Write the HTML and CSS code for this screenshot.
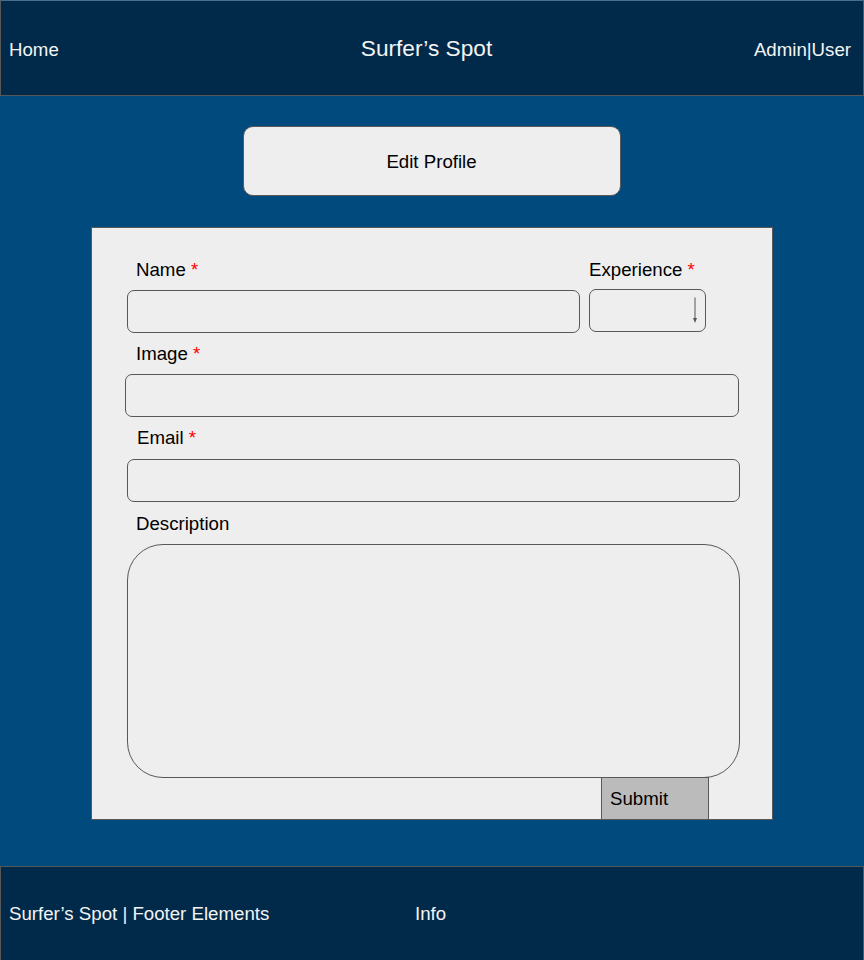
FILE: index.html
```html
<!DOCTYPE html>
<html lang="en">
<head>
<meta charset="utf-8">
<title>Surfer's Spot - Edit Profile</title>
<link rel="stylesheet" href="styles.css">
</head>
<body>
<header class="topbar">
  <a class="nav-home">Home</a>
  <div class="brand">Surfer’s Spot</div>
  <a class="nav-user">Admin|User</a>
</header>
<main class="content">
  <div class="page-title">Edit Profile</div>
  <form class="profile-form">
    <div class="row-top">
      <div class="field-name">
        <div class="label label-name">Name <span class="req">*</span></div>
        <div class="input input-name"></div>
      </div>
      <div class="field-exp">
        <div class="label label-exp">Experience <span class="req">*</span></div>
        <div class="select">
          <svg class="select-arrow" width="8" height="28" viewBox="0 0 8 28">
            <line x1="4" y1="0.5" x2="4" y2="22" stroke="#555" stroke-width="1"/>
            <path d="M2 21 L6 21 L4 26 Z" fill="#555"/>
          </svg>
        </div>
      </div>
    </div>
    <div class="label label-image">Image <span class="req">*</span></div>
    <div class="input input-image"></div>
    <div class="label label-email">Email <span class="req">*</span></div>
    <div class="input input-email"></div>
    <div class="label label-desc">Description</div>
    <div class="textarea"></div>
    <div class="submit">Submit</div>
  </form>
</main>
<footer class="footbar">
  <span class="foot-left">Surfer’s Spot | Footer Elements</span>
  <span class="foot-info">Info</span>
</footer>
</body>
</html>
```
FILE: styles.css
```css
* { box-sizing: border-box; }
html, body { margin: 0; padding: 0; }
body {
  font-family: "Liberation Sans", Arial, sans-serif;
  font-size: 18.67px;
  color: #000;
  background: #014a7d;
  overflow: hidden;
}

.topbar {
  height: 96px;
  background: #012a4a;
  border: 1px solid #575757;
  border-top-color: #4a6d8c;
  display: grid;
  grid-template-columns: 1fr auto 1fr;
  align-items: center;
  padding: 0 12px 0 8px;
  color: #f4f4f4;
}
.nav-home { justify-self: start; padding-top: 4px; }
.brand { font-size: 22.67px; margin-right: 7px; padding-top: 1px; }
.nav-user { justify-self: end; padding-top: 4px; }

.content {
  height: 770px;
  padding-top: 30px;
  display: flex;
  flex-direction: column;
  align-items: center;
}

.page-title {
  width: 378px;
  height: 70px;
  margin-left: -1px;
  background: #eeeeee;
  border: 1px solid #585858;
  border-radius: 10px;
  display: flex;
  align-items: center;
  justify-content: center;
  padding-top: 2px;
  flex-shrink: 0;
}

.profile-form {
  margin-top: 31px;
  width: 682px;
  height: 593px;
  flex-shrink: 0;
  background: #eeeeee;
  border: 1px solid #585858;
  padding-top: 32px;
  display: flex;
  flex-direction: column;
  align-items: flex-start;
}
.profile-form > * { flex-shrink: 0; }

.label {
  line-height: 20px;
  height: 20px;
}
.req { color: #ff0000; }

.row-top {
  display: flex;
  margin-left: 35px;
}
.field-name { width: 453px; }
.label-name { padding-left: 9px; margin-bottom: 10px; }
.field-exp { margin-left: 9px; }
.label-exp { margin-bottom: 9px; }

.input {
  height: 43px;
  background: #eeeeee;
  border: 1px solid #585858;
  border-radius: 7px;
}
.input-name { width: 453px; }

.select {
  width: 117px;
  height: 43px;
  border: 1px solid #585858;
  border-radius: 7px;
  position: relative;
}
.select-arrow {
  position: absolute;
  left: 101px;
  top: 7px;
}

.label-image { margin: 11px 0 10px 44px; }
.input-image { margin-left: 33px; width: 614px; }
.label-email { margin: 11px 0 11px 45px; }
.input-email { margin-left: 35px; width: 613px; }
.label-desc { margin: 12px 0 10px 44px; }

.textarea {
  margin-left: 35px;
  width: 613px;
  height: 234px;
  border: 1px solid #585858;
  border-radius: 36px;
}

.submit {
  margin-top: -1px;
  margin-left: 509px;
  width: 108px;
  height: 43px;
  background: #bbbbbb;
  border: 1px solid #585858;
  padding-left: 8px;
  display: flex;
  align-items: center;
}

.footbar {
  height: 94px;
  background: #012a4a;
  border: 1px solid #575757;
  border-bottom: none;
  display: flex;
  align-items: center;
  padding-left: 8px;
  color: #f4f4f4;
}
.foot-left { width: 406px; }
```
